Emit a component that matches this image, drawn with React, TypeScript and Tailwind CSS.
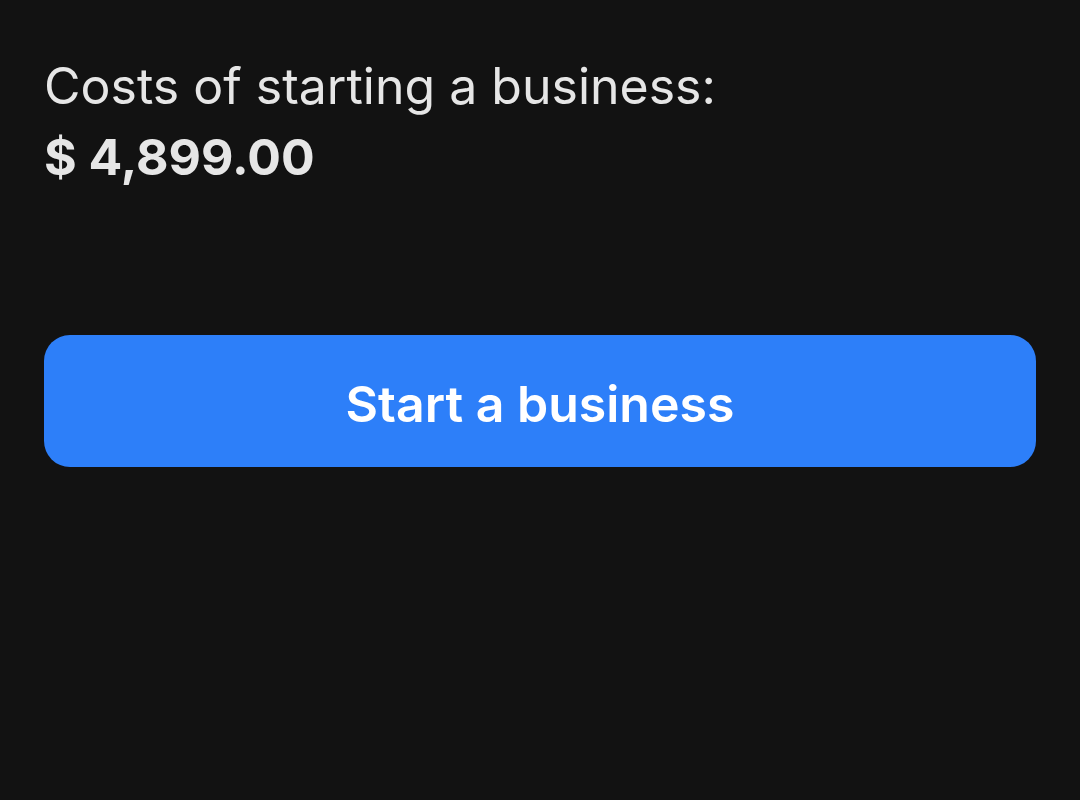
export default function App() {
  return (
    <div className="min-h-[800px] w-[1080px] bg-[#121212] px-[44px] pt-[50px]" style={{ fontFamily: "Inter, 'Noto Sans', sans-serif" }}>
      <div className="text-[50px] leading-[72px] text-[#e6e6e6] font-normal">Costs of starting a business:</div>
      <div className="text-[50px] leading-[72px] text-[#e6e6e6] font-bold -mt-[1px]">$ 4,899.00</div>
      <button className="mt-[142px] flex h-[132px] w-full items-center justify-center rounded-[26px] bg-[#2d7ff9] pt-[6px] text-[50px] font-semibold text-white">
        Start a business
      </button>
    </div>
  );
}
